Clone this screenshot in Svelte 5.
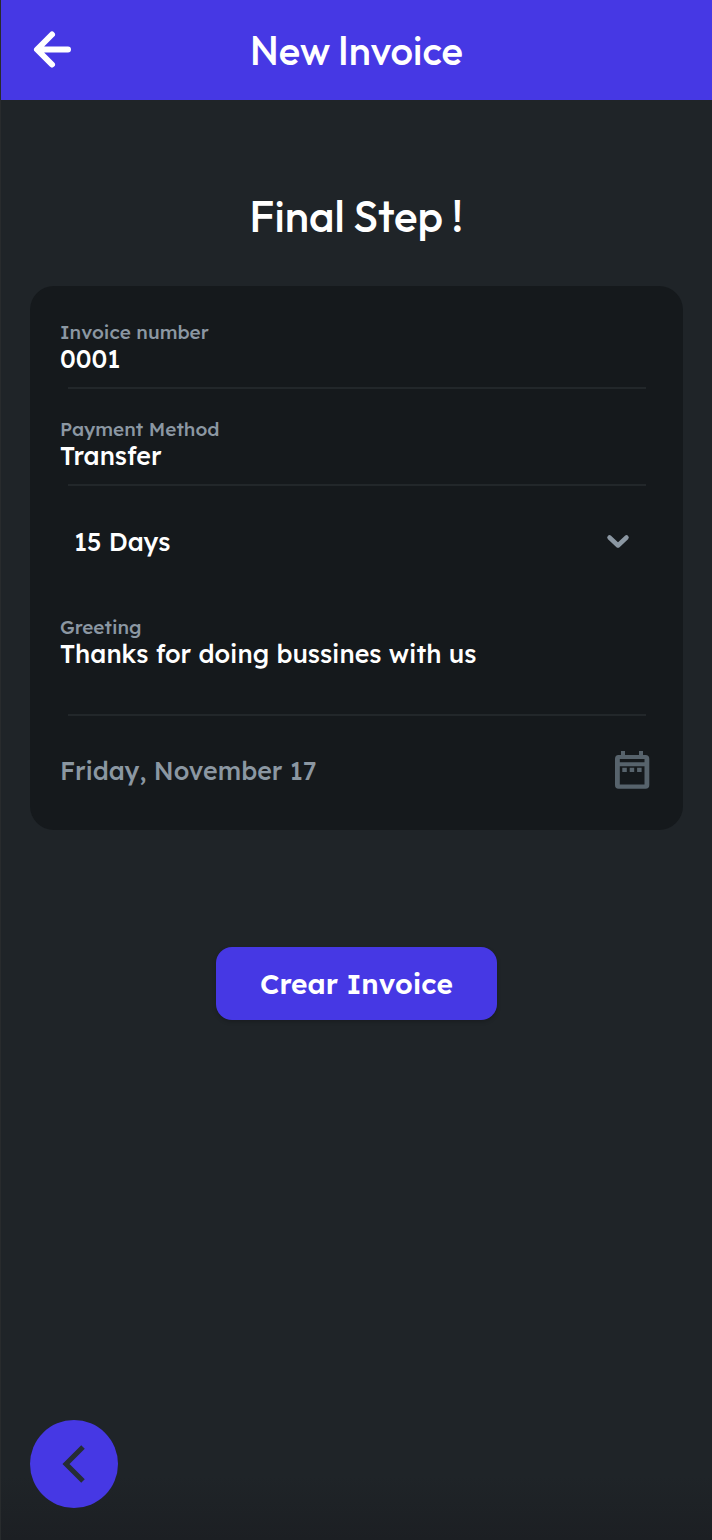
<script>
  let invoiceNumber = $state('0001');
  let paymentMethod = $state('Transfer');
  let term = $state('15 Days');
  let greeting = $state('Thanks for doing bussines with us');
  let date = $state('Friday, November 17');

  const terms = ['15 Days', '30 Days', '60 Days'];
</script>

<div class="screen">
  <header>
    <button class="icon-btn" type="button" aria-label="Back">
      <svg width="40" height="40" viewBox="0 0 40 40" fill="none" stroke="currentColor" stroke-width="6" stroke-linecap="round" stroke-linejoin="round">
        <path d="M21 4.500L6 19.500L21 34.500M7 19.500H37" />
      </svg>
    </button>
    <h1>New Invoice</h1>
  </header>

  <main>
    <h2>Final Step !</h2>

    <form onsubmit={(e) => e.preventDefault()}>
      <div class="card">
        <div class="field">
          <label for="number">Invoice number</label>
          <input id="number" type="text" bind:value={invoiceNumber} />
        </div>

        <div class="field">
          <label for="method">Payment Method</label>
          <input id="method" type="text" bind:value={paymentMethod} />
        </div>

        <div class="select">
          <select aria-label="Payment term" bind:value={term}>
            {#each terms as t}
              <option>{t}</option>
            {/each}
          </select>
          <svg width="24" height="16" viewBox="0 0 24 16" fill="none" stroke="currentColor" stroke-width="4.500" stroke-linecap="round" stroke-linejoin="round">
            <path d="M3.500 4.500L12 12.500L20.500 4.500" />
          </svg>
        </div>

        <div class="field greeting">
          <label for="greeting">Greeting</label>
          <textarea id="greeting" bind:value={greeting}></textarea>
        </div>

        <div class="date">
          <input type="text" aria-label="Due date" readonly bind:value={date} />
          <button class="icon-btn" type="button" aria-label="Pick a date">
            <svg width="36" height="40" viewBox="0 0 36 40" fill="currentColor">
              <path fill-rule="evenodd" d="M4.500 5H7V1H11V5H25V1H29V5H31.500Q35.300 5 35.300 8.800V35Q35.300 38.800 31.500 38.800H4.500Q1 38.800 1 35V8.800Q1 5 4.500 5ZM5.800 9V12.300H30.500V9ZM5.800 16.200V34.500H30.500V16.200Z" />
              <path d="M8.300 17.800h4.500v4.300h-4.500zM15.700 17.800h4.500v4.300h-4.500zM23.100 17.800h4.500v4.300h-4.500z" />
            </svg>
          </button>
        </div>
      </div>

      <button class="submit" type="submit">Crear Invoice</button>
    </form>
  </main>

  <footer>
    <button class="fab" type="button" aria-label="Previous step">
      <svg width="44" height="44" viewBox="0 0 44 44" fill="none" stroke="currentColor" stroke-width="5">
        <path d="M31 5L14 22L31 39" />
      </svg>
    </button>
  </footer>
</div>

<style>
  :global(body) { margin: 0; background: #1f2428; }

  .screen {
    min-height: 100vh; box-sizing: border-box;
    display: flex; flex-direction: column;
    border-left: 1px solid #282b2d;
    background: linear-gradient(to top, #1c1f23, #1f2428 64px);
    font-family: 'Lexend Deca', Lexend, Inter, sans-serif;
    font-weight: 500; color: #fff;
  }

  button, input, select, textarea {
    margin: 0; padding: 0; border: 0; background: none;
    font: inherit; color: inherit; outline: none;
  }
  button { cursor: pointer; }
  svg { display: block; }

  header {
    display: grid; grid-template-columns: 40px 1fr 40px; align-items: center;
    height: 100px; padding: 0 30px; background: #4638e4;
  }
  h1, h2 {
    margin: 0; text-align: center;
    font-family: Outfit, Lato, sans-serif; font-weight: 500;
  }
  h1 { font-size: 40px; line-height: 48px; }
  h2 { font-size: 44px; line-height: 52px; }

  main { padding: 90px 29px 0; }
  form { display: flex; flex-direction: column; align-items: center; margin-top: 44px; }

  .card {
    width: 100%; box-sizing: border-box; padding: 6px 29px 0 30px;
    border-radius: 24px; background: #15191c; font-size: 25px;
  }

  .field { display: flex; flex-direction: column; padding-top: 28px; }
  .field label { margin-bottom: 2px; font-size: 19px; line-height: 24px; color: #8b97a2; }
  .field input { height: 24px; }
  .field textarea { height: 56px; line-height: 26px; resize: none; overflow: hidden; }
  .field::after {
    content: ''; height: 2px; margin: 17px 8px 0; background: #22272a;
  }

  .select {
    display: grid; align-items: center; height: 54px; margin-top: 28px;
    color: #8b97a2;
  }
  .select select, .select svg { grid-area: 1 / 1; }
  .select select { appearance: none; height: 54px; padding: 0 14px; color: #fff; }
  .select option { background: #15191c; }
  .select svg { justify-self: end; margin-right: 24px; pointer-events: none; }

  .greeting { padding-top: 47px; }

  .date { display: flex; align-items: center; padding: 34px 4px 40px 0; color: #8b97a2; }
  .date input { flex: 1; min-width: 0; height: 40px; }
  .date .icon-btn { color: #57636c; }

  .submit {
    margin-top: 117px; padding: 0 44px; height: 73px;
    border-radius: 16px; background: #4638e4;
    box-shadow: 0 2px 4px rgba(0, 0, 0, .2);
    font-size: 28px; font-weight: 600;
  }

  footer { margin-top: auto; padding: 32px 29px; }
  .fab {
    display: grid; place-items: center; width: 88px; height: 88px;
    border-radius: 50%; background: #4638e4; color: #262d34;
  }
</style>
